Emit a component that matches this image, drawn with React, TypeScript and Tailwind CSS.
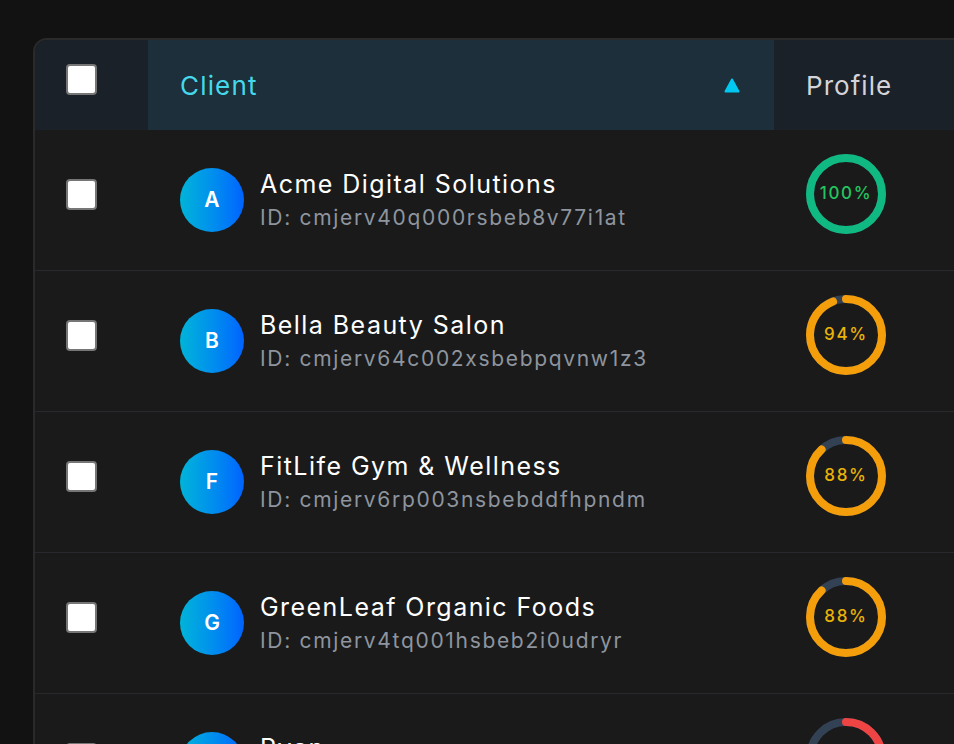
import React from "react";

type Client = {
  name: string;
  id: string;
  profile: number;
};

const clients: Client[] = [
  { name: "Acme Digital Solutions", id: "cmjerv40q000rsbeb8v77i1at", profile: 100 },
  { name: "Bella Beauty Salon", id: "cmjerv64c002xsbebpqvnw1z3", profile: 94 },
  { name: "FitLife Gym & Wellness", id: "cmjerv6rp003nsbebddfhpndm", profile: 88 },
  { name: "GreenLeaf Organic Foods", id: "cmjerv4tq001hsbeb2i0udryr", profile: 88 },
  { name: "Ryan", id: "cmjerv7ab004qsbebx2k9mzlp", profile: 32 },
];

function Checkbox() {
  return <div className="w-[31px] h-[31px] mb-[11px] rounded-[4px] border-2 border-[#767676] bg-white" />;
}

function ProfileRing({ value }: { value: number }) {
  const r = 36;
  const c = 2 * Math.PI * r;
  let stroke = "#10b981";
  let text = "text-[#22c55e]";
  if (value < 100 && value >= 60) {
    stroke = "#f59e0b";
    text = "text-[#eab308]";
  } else if (value < 60) {
    stroke = "#ef4444";
    text = "text-[#ef4444]";
  }
  return (
    <div className="relative w-[80px] h-[80px] mb-3">
      <svg width="80" height="80" viewBox="0 0 80 80" className="-rotate-90">
        <circle cx="40" cy="40" r={r} fill="none" stroke="#334155" strokeWidth="8" />
        <circle
          cx="40"
          cy="40"
          r={r}
          fill="none"
          stroke={stroke}
          strokeWidth="8"
          strokeLinecap={value < 100 ? "round" : "butt"}
          strokeDasharray={`${(c * value) / 100} ${c}`}
        />
      </svg>
      <div className={`absolute inset-0 flex items-center justify-center text-[17px] font-medium tracking-[0.1em] ${text}`}>
        {value}%
      </div>
    </div>
  );
}

export default function App() {
  return (
    <div
      className="w-screen h-screen overflow-hidden bg-[#121212] pl-[33px] pt-[38px]"
      style={{ fontFamily: "Inter, 'Noto Sans', sans-serif" }}
    >
      <div className="w-[1100px] rounded-tl-[14px] border-2 border-[#2a2a2a] bg-[#1a1a1a] overflow-hidden">
        {/* header */}
        <div className="flex h-[90px]">
          <div className="w-[113px] shrink-0 bg-[#1b2128] flex items-center pl-[31px]">
            <Checkbox />
          </div>
          <div className="w-[626px] shrink-0 bg-[#1c2f3b] flex items-center justify-between pl-[32px] pr-[34px]">
            <span className="text-[26px] tracking-[0.045em] text-[#45d8ea]">Client</span>
            <svg width="16" height="15" viewBox="0 0 16 15">
              <path d="M8 1.5 L14.5 13.5 L1.5 13.5 Z" fill="#00c8f0" stroke="#00c8f0" strokeWidth="2" strokeLinejoin="round" />
            </svg>
          </div>
          <div className="flex-1 bg-[#1b2128] flex items-center pl-[32px]">
            <span className="text-[26px] tracking-[0.04em] text-[#d4d4d8]">Profile</span>
          </div>
        </div>

        {/* rows */}
        {clients.map((c) => (
          <div key={c.id} className="flex h-[141px] border-b border-[#27292d]">
            <div className="w-[113px] shrink-0 flex items-center pl-[31px]">
              <Checkbox />
            </div>
            <div className="w-[626px] shrink-0 flex items-center gap-4 pl-[32px]">
              <div className="w-16 h-16 shrink-0 rounded-full bg-linear-to-r from-[#00b4d8] to-[#0062ff] flex items-center justify-center text-white text-[21px] font-semibold">
                {c.name[0]}
              </div>
              <div className="flex flex-col gap-1">
                <span className="text-[25px] leading-8 tracking-[0.058em] text-white whitespace-nowrap">{c.name}</span>
                <span className="text-[21px] leading-7 tracking-[0.08em] text-[#8e959f] whitespace-nowrap">ID: {c.id}</span>
              </div>
            </div>
            <div className="flex-1 flex items-center pl-[32px]">
              <ProfileRing value={c.profile} />
            </div>
          </div>
        ))}
      </div>
    </div>
  );
}
